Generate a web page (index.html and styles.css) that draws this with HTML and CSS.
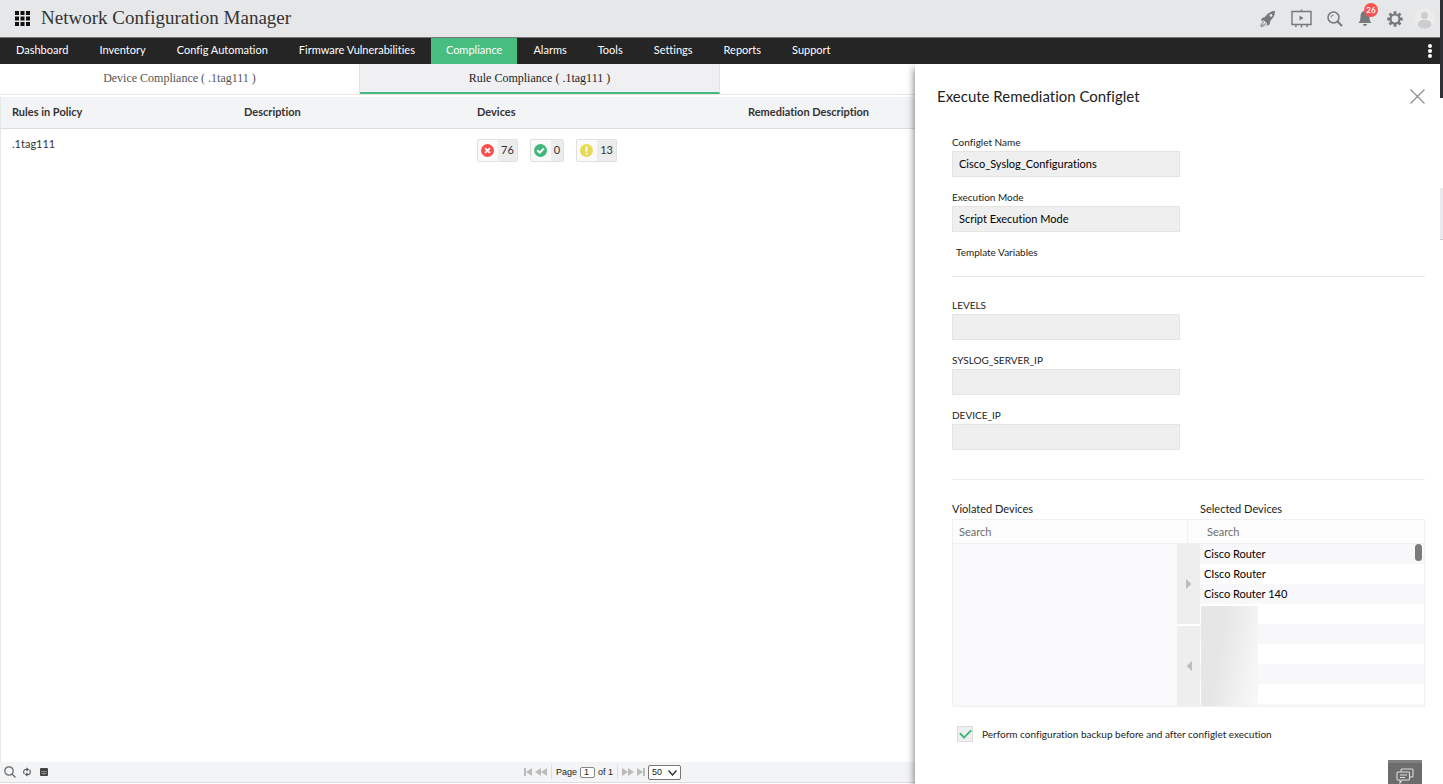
FILE: index.html
```
<!DOCTYPE html>
<html lang="en">
<head>
<meta charset="utf-8">
<title>Network Configuration Manager</title>
<link rel="stylesheet" href="styles.css">
</head>
<body>
<div class="app">
  <header class="topbar">
    <button class="icon-btn" aria-label="Applications">
      <svg width="15" height="15" viewBox="0 0 15 15" fill="#111"><path d="M0 0h4v4H0zM5.500 0h4v4h-4zM11 0h4v4h-4zM0 5.500h4v4H0zM5.500 5.500h4v4h-4zM11 5.500h4v4h-4zM0 11h4v4H0zM5.500 11h4v4h-4zM11 11h4v4h-4z"/></svg>
    </button>
    <h1 class="brand">Network Configuration Manager</h1>
    <div class="tools">
      <button class="icon-btn" aria-label="Getting started">
        <svg width="16" height="18" viewBox="0 0 16 18" fill="#77787b"><path d="M15 1C10 1 7 4 5 7L2 8 1 11l3-.5 3 3L6.500 16l3-1.500 1-4C13 8 15 6 15 1zM11 4a1.400 1.400 0 1 1 0 2.800A1.400 1.400 0 0 1 11 4z" fill-rule="evenodd"/><path d="M4 12c-2 0-3 2-3 4.500 2 0 4-1 4.500-3M2 15.500l2-2" fill="none" stroke="#77787b"/></svg>
      </button>
      <button class="icon-btn" aria-label="Presentation">
        <svg width="21" height="19" viewBox="0 0 21 19" fill="none" stroke="#77787b" stroke-width="1.400"><path d="M1 2.500h19v13H1zM10.500 .5v2M10.500 15.500v3M5.500 15.500l-1 2.500M15.500 15.500l1 2.500"/><path d="M8.500 6.500v5l4-2.500z" fill="#77787b" stroke="none"/></svg>
      </button>
      <button class="icon-btn" aria-label="Search">
        <svg width="16" height="16" viewBox="0 0 16 16" fill="none" stroke="#77787b"><circle cx="6.500" cy="6.500" r="5.500" stroke-width="1.500"/><path d="M4 6.500A2.500 2.500 0 0 1 6.500 4"/><path d="M10.500 10.500l4.500 4.500" stroke-width="2"/></svg>
      </button>
      <button class="icon-btn bell" aria-label="Notifications, 26 new">
        <svg width="14" height="15" viewBox="0 0 14 15" fill="#77787b"><path d="M7 0c-3 0-4.500 2-4.500 5 0 4-.5 5-2 7h13c-1.500-2-2-3-2-7 0-3-1.500-5-4.500-5zM5 13h4c0 2.500-4 2.500-4 0z"/></svg>
        <span class="badge">26</span>
      </button>
      <button class="icon-btn" aria-label="Settings">
        <svg width="16" height="16" viewBox="0 0 16 16" fill="none" stroke="#77787b"><circle cx="8" cy="8" r="4.500" stroke-width="2.200"/><path d="M8 .3v3M8 12.700v3M.3 8h3M12.700 8h3M2.500 2.500l2 2M11.500 11.500l2 2M2.500 13.500l2-2M11.500 4.500l2-2" stroke-width="2.800"/></svg>
      </button>
      <button class="icon-btn avatar" aria-label="Account">
        <svg width="21" height="21" viewBox="0 0 21 21"><circle cx="10.500" cy="10.500" r="10.500" fill="#ececed"/><circle cx="10.500" cy="7.500" r="3.500" fill="#cdcdcf"/><path d="M3.500 17c0-7 14-7 14 0-3 5-11 5-14 0z" fill="#cdcdcf"/></svg>
      </button>
    </div>
  </header>
  <nav class="nav">
    <a href="#">Dashboard</a>
    <a href="#">Inventory</a>
    <a href="#">Config Automation</a>
    <a href="#">Firmware Vulnerabilities</a>
    <a href="#" class="active" aria-current="page">Compliance</a>
    <a href="#">Alarms</a>
    <a href="#">Tools</a>
    <a href="#">Settings</a>
    <a href="#">Reports</a>
    <a href="#">Support</a>
    <button class="icon-btn more" aria-label="More">
      <svg width="4" height="14" viewBox="0 0 4 14" fill="#fff"><circle cx="2" cy="2" r="2"/><circle cx="2" cy="7" r="2"/><circle cx="2" cy="12" r="2"/></svg>
    </button>
  </nav>
  <div class="workspace">
    <main class="page">
      <div class="tabs">
        <button class="tab">Device Compliance ( .1tag111 )</button>
        <button class="tab current">Rule Compliance ( .1tag111 )</button>
      </div>
      <div class="grid-area">
        <table class="rules">
          <thead>
            <tr><th class="c-rule">Rules in Policy</th><th class="c-desc">Description</th><th class="c-dev">Devices</th><th>Remediation Description</th></tr>
          </thead>
          <tbody>
            <tr>
              <td>.1tag111</td>
              <td></td>
              <td>
                <div class="chips">
                  <span class="chip"><span class="mark"><svg width="13" height="13" viewBox="0 0 13 13"><circle cx="6.500" cy="6.500" r="6.500" fill="#f9504f"/><path d="M4.100 4.100l4.800 4.800M8.900 4.100L4.100 8.900" stroke="#fff" stroke-width="1.900"/></svg></span><span class="num">76</span></span>
                  <span class="chip"><span class="mark"><svg width="13" height="13" viewBox="0 0 13 13"><circle cx="6.500" cy="6.500" r="6.500" fill="#3fb97b"/><path d="M3.200 6.200l2.500 2.500 4.200-4.200" fill="none" stroke="#fff" stroke-width="2"/></svg></span><span class="num">0</span></span>
                  <span class="chip"><span class="mark"><svg width="13" height="13" viewBox="0 0 13 13"><circle cx="6.500" cy="6.500" r="6.500" fill="#e6da55"/><path d="M6.500 2.500v5M6.500 8.800v1.700" stroke="#fff" stroke-width="1.800"/></svg></span><span class="num">13</span></span>
                </div>
              </td>
              <td></td>
            </tr>
          </tbody>
        </table>
      </div>
      <footer class="pager">
        <div class="actions">
          <button class="icon-btn" aria-label="Search rows"><svg width="12" height="12" viewBox="0 0 12 12" fill="none" stroke="#666" stroke-width="1.200"><circle cx="5" cy="5" r="4.200"/><path d="M8 8l3.500 3.500"/></svg></button>
          <button class="icon-btn" aria-label="Refresh"><svg width="8" height="10" viewBox="0 0 8 10" fill="none" stroke="#555" stroke-width="1.100"><path d="M4.500 2.500H2.500C.3 2.500 .3 6 1.500 7M3.500 7.500h2c2.200 0 2.200-3.500 1-4.500M3.500 .8l1.700 1.700-1.700 1.700M4.500 5.800L2.800 7.500l1.700 1.700"/></svg></button>
          <button class="icon-btn" aria-label="Columns"><svg width="8" height="8" viewBox="0 0 8 8"><rect width="8" height="8" rx="1" fill="#444"/><path d="M1 3.500h6M1 5.500h6M4 3v4" stroke="#aaa" stroke-width=".6"/></svg></button>
        </div>
        <div class="paging">
          <button class="icon-btn" aria-label="First page"><svg width="8" height="8" viewBox="0 0 8 8" fill="#bbb"><path d="M0 0h2v8H0zM8 0v8L2 4z"/></svg></button>
          <button class="icon-btn" aria-label="Previous page"><svg width="12" height="8" viewBox="0 0 12 8" fill="#bbb"><path d="M6 0v8L0 4zM12 0v8L6 4z"/></svg></button>
          <span class="sep"></span>
          <label for="pg">Page</label><input id="pg" class="pg" value="1"><span>of 1</span>
          <span class="sep"></span>
          <button class="icon-btn" aria-label="Next page"><svg width="12" height="8" viewBox="0 0 12 8" fill="#bbb"><path d="M0 0v8l6-4zM6 0v8l6-4z"/></svg></button>
          <button class="icon-btn" aria-label="Last page"><svg width="8" height="8" viewBox="0 0 8 8" fill="#bbb"><path d="M6 0h2v8H6zM0 0v8l6-4z"/></svg></button>
          <span class="size"><select aria-label="Rows per page"><option>50</option></select><svg width="9" height="6" viewBox="0 0 9 6" fill="none" stroke="#222" stroke-width="1.200"><path d="M.5.5l4 4.500 4-4.500"/></svg></span>
        </div>
      </footer>
    </main>

    <aside class="drawer" aria-label="Execute Remediation Configlet">
      <div class="drawer-head">
        <h2>Execute Remediation Configlet</h2>
        <button class="icon-btn" aria-label="Close"><svg width="15" height="15" viewBox="0 0 15 15" stroke="#888a8d" stroke-width="1.100"><path d="M.5.5l14 14M14.500.5l-14 14"/></svg></button>
      </div>
      <form class="form">
        <div class="field"><label for="f1">Configlet Name</label><input id="f1" value="Cisco_Syslog_Configurations" readonly></div>
        <div class="field"><label for="f2">Execution Mode</label><input id="f2" value="Script Execution Mode" readonly></div>
        <h3 class="sub">Template Variables</h3>
        <div class="vars">
          <div class="field"><label for="f3">LEVELS</label><input id="f3"></div>
          <div class="field"><label for="f4">SYSLOG_SERVER_IP</label><input id="f4"></div>
          <div class="field"><label for="f5">DEVICE_IP</label><input id="f5"></div>
        </div>
        <div class="names"><label for="s1">Violated Devices</label><label for="s2">Selected Devices</label></div>
        <div class="picker">
          <input id="s1" class="find" placeholder="Search">
          <input id="s2" class="find right" placeholder="Search">
          <div class="list"></div>
          <div class="transfer">
            <button type="button" aria-label="Add"><svg width="6" height="10" viewBox="0 0 6 10" fill="#bdbdbd"><path d="M0 0v10l5.500-5z"/></svg></button>
            <button type="button" aria-label="Remove"><svg width="6" height="10" viewBox="0 0 6 10" fill="#bdbdbd"><path d="M6 0v10L.5 5z"/></svg></button>
          </div>
          <div class="list chosen">
            <ul>
              <li>Cisco Router</li><li>CIsco Router</li><li>Cisco Router 140</li>
              <li></li><li></li><li></li><li></li><li></li><li></li>
            </ul>
            <span class="masked"></span>
            <span class="thumb"></span>
          </div>
        </div>
        <label class="backup"><input type="checkbox" checked>Perform configuration backup before and after configlet execution</label>
      </form>
      <button class="chat" aria-label="Chat"><svg width="18" height="17" viewBox="0 0 18 17" fill="none" stroke="#ddd" stroke-width="1.100"><path d="M5 4V2q0-1 1-1h10q1 0 1 1v6q0 1-1 1h-2"/><path d="M2 4h10.500q1 0 1 1v6q0 1-1 1H6l-2 3v-3H2q-1 0-1-1V5q0-1 1-1zM4 7h7M4 9.500h5"/></svg></button>
    </aside>
  </div>
</div>
<div class="edge"><span class="edge-dark"></span><span class="edge-light"></span></div>
</body>
</html>
```
FILE: styles.css
```
* { box-sizing: border-box; }
body {
  margin: 0;
  display: flex;
  min-height: 100vh;
  font-family: Lato, "Open Sans", sans-serif;
  font-size: 11px;
  line-height: 16px;
  font-variant-ligatures: none;
  color: #222;
  background: #fff;
}
h1, h2, h3, ul { margin: 0; padding: 0; font-weight: 400; list-style: none; }
button, input, select { font: inherit; font-variant-ligatures: none; color: inherit; margin: 0; border-radius: 0; }
svg { display: block; }
.icon-btn { display: flex; padding: 0; border: 0; background: none; }

.app { flex: 1; min-width: 0; display: flex; flex-direction: column; }
.edge { width: 3px; display: flex; flex-direction: column; gap: 90px; }
.edge-dark { height: 98px; background: #2f3036; }
.edge-light { height: 52px; background: #ebebed; border-bottom: 1px solid #c8c8d0; }

.topbar {
  display: flex;
  align-items: center;
  height: 38px;
  padding: 0 5px 0 15px;
  background: #e6e7e9;
  border-bottom: 1px solid #777;
}
.brand {
  margin-left: 11px;
  padding-bottom: 2px;
  font-family: "Roboto Slab", "Liberation Serif", serif;
  font-size: 19px;
  line-height: 24px;
  color: #333;
}
.tools { margin-left: auto; display: flex; align-items: center; gap: 15px; }
.avatar { margin-left: -4px; }
.bell { position: relative; }
.badge {
  position: absolute;
  left: 6px;
  top: -8px;
  width: 14px;
  height: 14px;
  border-radius: 50%;
  background: #fb5253;
  color: #fff;
  font-size: 8px;
  font-weight: 700;
  line-height: 14px;
  text-align: center;
}

.nav { display: flex; align-items: stretch; gap: 1px; height: 26px; padding-left: 1px; background: #252525; }
.nav a { padding: 0 15px; line-height: 24px; color: #fff; text-decoration: none; }
.nav a.active { background: #48bd80; }
.more { margin-left: auto; padding-right: 8px; align-items: center; }

.workspace { position: relative; flex: 1; display: flex; overflow: hidden; }
.page { flex: 1; display: flex; flex-direction: column; padding-bottom: 1px; }
.tabs { display: flex; height: 31px; border-bottom: 1px solid #e6e6e6; }
.tab {
  width: 25%;
  height: 30px;
  padding: 0 0 2px;
  border: 0;
  border-right: 1px solid #e2e2e2;
  background: #fff;
  font-family: "Roboto Slab", "Liberation Serif", serif;
  font-size: 12px;
  color: #555;
}
.tab.current { padding: 0; background: #f0f0f2; border-bottom: 2px solid #48b880; color: #222; }
.grid-area { flex: 1; margin-top: 2px; border-left: 1px solid #e6e6e6; }
.rules { width: 100%; table-layout: fixed; border-collapse: collapse; }
.rules th {
  height: 31px;
  padding: 0 11px 1px;
  text-align: left;
  font-weight: 700;
  color: #333;
  background: #f3f4f6;
  border-bottom: 1px solid #ddd;
}
.rules td { padding: 7px 11px; vertical-align: top; color: #333; }
.c-rule { width: 232px; }
.c-desc { width: 233px; }
.c-dev { width: 271px; }
.chips { display: flex; gap: 12px; padding-top: 3px; }
.chip { display: flex; height: 23px; border: 1px solid #e0e0e0; border-radius: 2px; background: #fafafa; }
.mark { display: flex; align-items: center; padding: 0 4px 0 3px; }
.num { padding: 0 3px; line-height: 20px; background: #ececec; }

.pager {
  display: grid;
  grid-template-columns: 36% auto 1fr;
  align-items: center;
  height: 21px;
  padding-left: 4px;
  background: #f3f4f6;
  border-bottom: 1px solid #ddd;
  font-family: "Liberation Sans", Arial, sans-serif;
  font-size: 9px;
}
.actions { display: flex; align-items: center; gap: 7px; }
.actions .icon-btn + .icon-btn + .icon-btn { margin-left: 2px; }
.paging { display: flex; align-items: center; gap: 3px; padding-left: 3px; }
.sep { width: 1px; height: 14px; margin: 0 1px; background: #ddd; }
.pg { width: 15px; height: 11px; padding: 0 3px; border: 1px solid #888; border-radius: 2px; background: #fff; }
.size { position: relative; }
.size select { appearance: none; width: 33px; height: 15px; padding: 0 3px; line-height: 13px; border: 1px solid #777; border-radius: 2px; background: #fff; display: block; }
.size svg { position: absolute; right: 4px; top: 5px; pointer-events: none; }

.drawer {
  position: absolute;
  top: 0;
  right: 0;
  bottom: 0;
  width: 525px;
  padding: 0 15px 0 22px;
  background: #fff;
  box-shadow: 0 4px 8px rgba(0, 0, 0, 0.6);
}
.drawer-head { display: flex; align-items: center; justify-content: space-between; height: 64px; }
.drawer-head h2 { font-size: 15px; line-height: 20px; color: #222; }
.form { padding: 6px 0 0 15px; }
.field { display: flex; flex-direction: column; align-items: flex-start; gap: 1px; margin-bottom: 12px; }
.field label { font-size: 10px; color: #222; }
.field input { width: 228px; height: 26px; padding: 0 6px 2px; border: 1px solid #e4e4e4; background: #efefef; color: #000; outline: 0; }
.sub { padding: 0 4px; font-size: 10px; }
.vars { margin-top: 16px; padding: 20px 0 17px; border-top: 1px solid #e8e8e8; border-bottom: 1px solid #eee; }
.names, .picker { display: grid; grid-template-columns: minmax(0, 1fr) 11px 12px minmax(0, 1fr); }
.names { margin-top: 21px; }
.names label { grid-column: 1 / 4; }
.names label + label { grid-column: 4; }
.picker { margin-top: 2px; grid-template-rows: 24px 162px; border: 1px solid #f0f0f0; }
.find { grid-column: 1 / 3; min-width: 0; padding: 0 6px; border: 0; border-right: 1px solid #f0f0f0; border-bottom: 1px solid #f0f0f0; background: #fcfcfc; outline: 0; }
.find.right { grid-column: 3 / 5; padding-left: 19px; border-right: 0; }
.find::placeholder { color: #6d6d6d; opacity: 1; }
.list { position: relative; overflow: hidden; background: #f9f9fb; }
.transfer { grid-column: 2 / 4; display: flex; flex-direction: column; gap: 2px; }
.transfer button { flex: 1; display: flex; align-items: center; justify-content: center; padding: 0; border: 0; background: #eee; }
.list li { height: 20px; padding: 0 4px; line-height: 20px; color: #000; background: #fff; }
.list li:nth-child(odd) { background: #f8f8fa; }
.masked {
  position: absolute;
  left: 1px;
  top: 62px;
  bottom: 0;
  width: 57px;
  background: linear-gradient(100deg, #e6e6e6 35%, #f5f5f5 85%, #f8f8f8);
}
.thumb { position: absolute; right: 2px; top: 0; width: 7px; height: 17px; border-radius: 4px; background: #7b7b7b; }
.backup { display: flex; align-items: center; gap: 9px; margin: 19px 0 0 5px; font-size: 10px; }
.backup input {
  appearance: none;
  width: 16px;
  height: 16px;
  border: 1px solid #ddd;
  background: #efefef;
  display: grid;
  place-items: center;
}
.backup input:checked::before {
  content: "";
  width: 9px;
  height: 5px;
  margin-bottom: 3px;
  border: solid #3fb97b;
  border-width: 0 0 2px 2px;
  transform: rotate(-45deg);
}
.chat {
  position: absolute;
  right: 18px;
  bottom: 0;
  width: 34px;
  height: 24px;
  padding: 5px 8px 0;
  border: 0;
  border-top: 3px solid #808080;
  background: #6c6c6c;
  overflow: hidden;
}
```
